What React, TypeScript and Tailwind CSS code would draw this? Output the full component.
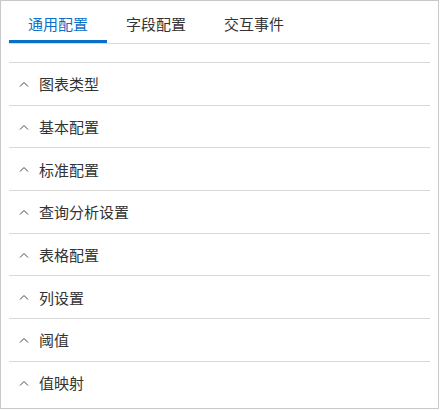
import { useState } from "react";

const tabs = ["通用配置", "字段配置", "交互事件"];
const sections = ["图表类型", "基本配置", "标准配置", "查询分析设置", "表格配置", "列设置", "阈值", "值映射"];

function Chevron() {
  return (
    <svg width="10" height="6" viewBox="0 0 10 6" className="shrink-0">
      <path d="M1 5.5 L5 1.5 L9 5.5" fill="none" stroke="#444" strokeWidth="1" />
    </svg>
  );
}

export default function App() {
  const [active, setActive] = useState(0);

  return (
    <div
      className="w-[439px] h-[409px] bg-white border border-[#c8c8c8] overflow-hidden"
      style={{ fontFamily: '"Noto Sans CJK SC", "Noto Sans", sans-serif' }}
    >
      <div className="mx-[8px] mt-[5px] flex border-b border-[#d9d9d9]">
        {tabs.map((t, i) => (
          <button
            key={t}
            onClick={() => setActive(i)}
            className={
              i === active
                ? "w-[98px] h-[37px] text-[15px] text-[#0a6fc9] border-b-[3px] border-[#0a6fc9] pt-[3px]"
                : "w-[98px] h-[37px] text-[15px] text-[#333] border-b-[3px] border-transparent pt-[3px]"
            }
          >
            {t}
          </button>
        ))}
      </div>

      <div className="mx-[8px] mt-[18px] border-t border-[#d9d9d9]">
        {sections.map((s, i) => (
          <div
            key={s}
            className={
              i === sections.length - 1
                ? "h-[42px] flex items-center gap-[10px] pl-[10px]"
                : "h-[42.7px] flex items-center gap-[10px] pl-[10px] border-b border-[#d9d9d9]"
            }
          >
            <Chevron />
            <span className="text-[15px] text-[#333] leading-none">{s}</span>
          </div>
        ))}
      </div>
    </div>
  );
}
